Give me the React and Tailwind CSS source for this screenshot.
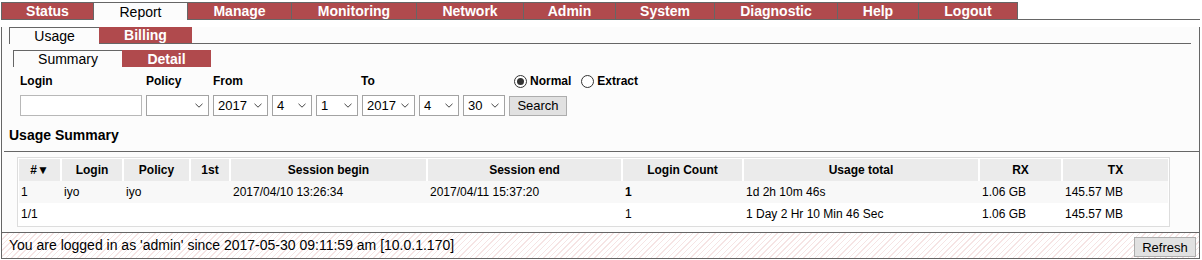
import React from "react";

// Top-level menu, widths measured from the screenshot (border-left included).
const menu = [
  { label: "Status", w: "w-[92px]" },
  { label: "Report", w: "w-[94px]", active: true },
  { label: "Manage", w: "w-[104px]" },
  { label: "Monitoring", w: "w-[125px]" },
  { label: "Network", w: "w-[107px]" },
  { label: "Admin", w: "w-[92px]" },
  { label: "System", w: "w-[99px]" },
  { label: "Diagnostic", w: "w-[123px]" },
  { label: "Help", w: "w-[81px]" },
  { label: "Logout", w: "w-[100px] border-r", last: true },
];

const headers = [
  "#▼",
  "Login",
  "Policy",
  "1st",
  "Session begin",
  "Session end",
  "Login Count",
  "Usage total",
  "RX",
  "TX",
];

const rows = [
  {
    bg: "bg-[#f8f8f8]",
    cells: ["1", "iyo", "iyo", "", "2017/04/10 13:26:34", "2017/04/11 15:37:20", "1", "1d 2h 10m 46s", "1.06 GB", "145.57 MB"],
    boldCount: true,
  },
  {
    bg: "bg-white",
    cells: ["1/1", "", "", "", "", "", "1", "1 Day 2 Hr 10 Min 46 Sec", "1.06 GB", "145.57 MB"],
  },
];

function Chevron() {
  return (
    <svg width="8" height="5" viewBox="0 0 8 5" className="shrink-0">
      <path d="M0.5 0.8 L4 4.2 L7.5 0.8" fill="none" stroke="#444" strokeWidth="1" />
    </svg>
  );
}

// Fake native select box.
function Select({ className, value }) {
  return (
    <div
      className={`flex h-[21px] items-center justify-between border border-[#a3a3a3] bg-white pl-[4px] pr-[5px] text-[13px] text-black ${className}`}
    >
      <span>{value}</span>
      <Chevron />
    </div>
  );
}

function Radio({ checked, label }) {
  return (
    <div className="flex items-center gap-[3px]">
      <span className="flex h-[13px] w-[13px] items-center justify-center rounded-full border border-[#333] bg-white">
        {checked ? <span className="h-[7px] w-[7px] rounded-full bg-[#333]" /> : null}
      </span>
      <span className="text-[12px] font-bold text-black">{label}</span>
    </div>
  );
}

export default function App() {
  return (
    <div className="h-[260px] w-[1202px] bg-white pl-[1px] pt-[2px] font-['Liberation_Sans',Arial,sans-serif] text-black">
      {/* Main menu */}
      <div className="flex w-[1199px] items-end">
        {menu.map((m) =>
          m.active ? (
            <div
              key={m.label}
              className={`flex h-[18px] items-center justify-center border-l border-t border-[#666] bg-[#fcfcfc] text-[14px] leading-[16px] ${m.w}`}
            >
              {m.label}
            </div>
          ) : (
            <div
              key={m.label}
              className={`flex h-[18px] items-center justify-center border-b border-l border-t border-[#666] bg-[#b04a4d] text-[14px] font-bold leading-[16px] text-white ${m.w}`}
            >
              {m.label}
            </div>
          )
        )}
        <div className="h-px flex-1 bg-[#666]" />
      </div>

      {/* Panel */}
      <div className="w-[1199px] border-x border-b border-[#666] bg-[#fcfcfc] pb-[5px]">
        {/* Usage / Billing */}
        <div className="ml-[7px] mt-[7px] flex w-[1182px]">
          <div className="flex h-[17px] w-[90px] items-center justify-center border-l border-t border-[#666] text-[14px] leading-[16px]">
            Usage
          </div>
          <div className="flex h-[17px] w-[93px] items-center justify-center border-b border-[#666] bg-[#b04a4d] text-[14px] font-bold leading-[16px] text-white">
            Billing
          </div>
          <div className="h-[17px] flex-1 border-b border-[#666]" />
        </div>

        {/* Summary / Detail */}
        <div className="ml-[11px] mt-[6px] flex">
          <div className="flex h-[17px] w-[109px] items-center justify-center border-l border-t border-[#666] text-[14px] leading-[16px]">
            Summary
          </div>
          <div className="flex h-[17px] w-[89px] items-center justify-center bg-[#b04a4d] text-[14px] font-bold leading-[16px] text-white">
            Detail
          </div>
        </div>

        {/* Labels */}
        <div className="mt-[7px] flex h-[14px] items-center pl-[18px] text-[12px] font-bold leading-[14px]">
          <div className="w-[126px]">Login</div>
          <div className="w-[67px]">Policy</div>
          <div className="w-[148px]">From</div>
          <div className="w-[153px]">To</div>
          <div className="flex items-center gap-[10px]">
            <Radio checked label="Normal" />
            <Radio label="Extract" />
          </div>
        </div>

        {/* Inputs */}
        <div className="mt-[7px] flex items-center gap-[4px] pl-[18px]">
          <div className="h-[21px] w-[122px] border border-[#b8b8b8] bg-white" />
          <Select className="w-[63px]" value="" />
          <Select className="w-[55px]" value="2017" />
          <Select className="w-[40px]" value="4" />
          <Select className="w-[42px]" value="1" />
          <Select className="w-[53px]" value="2017" />
          <Select className="w-[40px]" value="4" />
          <Select className="w-[42px]" value="30" />
          <button className="flex h-[20px] w-[58px] items-center justify-center border border-[#adadad] bg-[#e1e1e1] text-[13px] leading-[15px]">
            Search
          </button>
        </div>

        <div className="ml-[7px] mt-[11px] text-[14px] font-bold leading-[16px]">Usage Summary</div>
        <div className="ml-[2px] mt-[8px] border-t border-[#666]" />

        {/* Result table */}
        <div className="ml-[15px] mt-[5px] w-[1153px] border border-[#dddddd] bg-white p-px">
          <div className="grid grid-cols-[43px_62px_67px_40px_197px_195px_121px_236px_83px_105px] text-[12px] leading-[14px]">
            {headers.map((h, i) => (
              <div
                key={h}
                className={`flex h-[22px] items-center justify-center bg-[#ebebeb] font-bold ${
                  i < headers.length - 1 ? "border-r-2 border-white" : ""
                }`}
              >
                {h}
              </div>
            ))}
            {rows.map((r, ri) =>
              r.cells.map((c, ci) => (
                <div
                  key={`${ri}-${ci}`}
                  className={`flex h-[22px] items-center pl-[2px] ${r.bg} ${
                    r.boldCount && ci === 6 ? "font-bold" : ""
                  }`}
                >
                  {c}
                </div>
              ))
            )}
          </div>
        </div>
      </div>

      {/* Footer */}
      <div className="flex h-[26px] w-[1199px] items-start justify-between border-x border-b border-[#666] bg-[repeating-linear-gradient(135deg,#f6e4e4_0px,#f6e4e4_1px,#ffffff_1px,#ffffff_4px)] pl-[7px] pr-[3px] pt-[4px]">
        <span className="text-[14px] leading-[16px]">
          You are logged in as 'admin' since 2017-05-30 09:11:59 am [10.0.1.170]
        </span>
        <button className="flex h-[20px] w-[62px] items-center justify-center border border-[#adadad] bg-[#e1e1e1] text-[13px] leading-[15px]">
          Refresh
        </button>
      </div>
    </div>
  );
}
